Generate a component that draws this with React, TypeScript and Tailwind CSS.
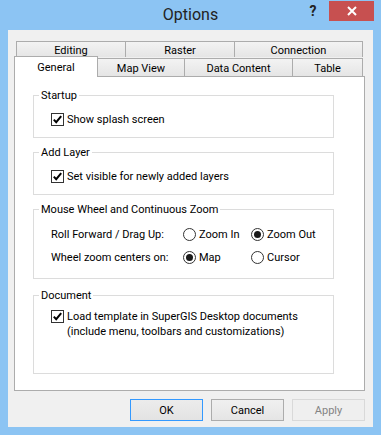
import React from "react";

function CheckBox() {
  return (
    <div className="w-[13px] h-[13px] shrink-0 border border-[#333333] bg-white flex items-center justify-center">
      <svg width="11" height="11" viewBox="0 0 11 11">
        <path d="M1.8 5.6 L4.2 8.2 L9.2 2.2" fill="none" stroke="#000" strokeWidth="2" />
      </svg>
    </div>
  );
}

function Radio({ on }: { on?: boolean }) {
  return (
    <div className="w-[13px] h-[13px] shrink-0 rounded-full border border-[#333333] bg-white flex items-center justify-center">
      {on && <div className="w-[7px] h-[7px] rounded-full bg-[#1a1a1a]" />}
    </div>
  );
}

function Group({ title, h, mt, children }: { title: string; h: string; mt: string; children: React.ReactNode }) {
  return (
    <div className={`w-[301px] border border-[#dcdcdc] flex flex-col ${h} ${mt}`}>
      <span className="-mt-[8px] ml-[5px] px-[2px] bg-white self-start leading-[15px] h-[15px]">{title}</span>
      {children}
    </div>
  );
}

const tabBase =
  "h-full border-t border-l border-r border-[#acacac] bg-linear-to-b from-[#f3f3f3] to-[#e5e5e5] flex items-center justify-center leading-[15px] pt-[2px]";

export default function App() {
  return (
    <div className="w-[381px] h-[435px] bg-[#8cc4f3] flex flex-col font-['Roboto',sans-serif] text-[11px] text-black">
      {/* title bar */}
      <div className="h-[30px] shrink-0 grid grid-cols-[1fr_auto_1fr]">
        <div />
        <div className="flex items-center text-[16px] text-[#222] pb-[1px]">Options</div>
        <div className="flex justify-end items-start pr-[7px] pt-[1px]">
          <div className="w-[32px] h-[20px] flex items-center justify-center text-[14px] font-bold text-[#222]">?</div>
          <div className="w-[45px] h-[20px] bg-[#c75050] flex items-center justify-center">
            <svg width="10" height="10" viewBox="0 0 10 10">
              <path d="M1 1 L9 9 M9 1 L1 9" stroke="#fff" strokeWidth="2" />
            </svg>
          </div>
        </div>
      </div>
      {/* client */}
      <div className="mx-[8px] mb-[8px] flex-1 bg-[#f0f0f0] flex flex-col pl-[6px] pr-[8px] pt-[11px]">
        {/* tab strip */}
        <div className="flex flex-col">
          <div className="h-[16px] flex pl-[2px]">
            <div className={`${tabBase} w-[110px]`}>Editing</div>
            <div className={`${tabBase} w-[110px] -ml-px`}>Raster</div>
            <div className={`${tabBase} w-[129px] -ml-px`}>Connection</div>
          </div>
          <div className="h-[19px] flex items-end">
            <div className="relative z-10 w-[84px] h-[21px] -mb-px border-t border-l border-r border-[#acacac] bg-white flex items-center justify-center leading-[15px]">
              General
            </div>
            <div className="h-[18px] flex">
              <div className={`${tabBase} w-[88px] -ml-px`}>Map View</div>
              <div className={`${tabBase} w-[109px] -ml-px`}>Data Content</div>
              <div className={`${tabBase} w-[71px] -ml-px`}>Table</div>
            </div>
          </div>
        </div>
        {/* page */}
        <div className="w-[351px] h-[315px] border border-[#acacac] bg-white flex flex-col pl-[18px] pt-[18px]">
          <Group title="Startup" h="h-[43px]" mt="">
            <div className="mt-[9px] ml-[17px] flex items-center gap-[3px] leading-[15px]">
              <CheckBox />
              <span>Show splash screen</span>
            </div>
          </Group>
          <Group title="Add Layer" h="h-[43px]" mt="mt-[14px]">
            <div className="mt-[9px] ml-[17px] flex items-center gap-[3px] leading-[15px]">
              <CheckBox />
              <span>Set visible for newly added layers</span>
            </div>
          </Group>
          <Group title="Mouse Wheel and Continuous Zoom" h="h-[70px]" mt="mt-[14px]">
            <div className="mt-[10px] ml-[17px] flex items-center leading-[15px] h-[15px]">
              <span className="w-[132px]">Roll Forward / Drag Up:</span>
              <div className="w-[68px] flex items-center gap-[3px]">
                <Radio />
                <span>Zoom In</span>
              </div>
              <div className="flex items-center gap-[3px]">
                <Radio on />
                <span>Zoom Out</span>
              </div>
            </div>
            <div className="mt-[8px] ml-[17px] flex items-center leading-[15px] h-[15px]">
              <span className="w-[132px]">Wheel zoom centers on:</span>
              <div className="w-[68px] flex items-center gap-[3px]">
                <Radio on />
                <span>Map</span>
              </div>
              <div className="flex items-center gap-[3px]">
                <Radio />
                <span>Cursor</span>
              </div>
            </div>
          </Group>
          <Group title="Document" h="h-[79px]" mt="mt-[16px]">
            <div className="mt-[6px] ml-[17px] flex items-start gap-[3px] leading-[15px]">
              <div className="mt-[1px]">
                <CheckBox />
              </div>
              <div className="flex flex-col">
                <span>Load template in SuperGIS Desktop documents</span>
                <span>(include menu, toolbars and customizations)</span>
              </div>
            </div>
          </Group>
        </div>
        {/* buttons */}
        <div className="mt-[8px] flex justify-end gap-[8px]">
          <button className="w-[73px] h-[22px] border border-[#3399ff] bg-linear-to-b from-[#ececec] to-[#e3e3e3] leading-[15px]">OK</button>
          <button className="w-[73px] h-[22px] border border-[#acacac] bg-linear-to-b from-[#f0f0f0] to-[#e5e5e5] leading-[15px]">Cancel</button>
          <button className="w-[73px] h-[22px] border border-[#d9d9d9] bg-[#efefef] text-[#838383] leading-[15px]">Apply</button>
        </div>
      </div>
    </div>
  );
}
